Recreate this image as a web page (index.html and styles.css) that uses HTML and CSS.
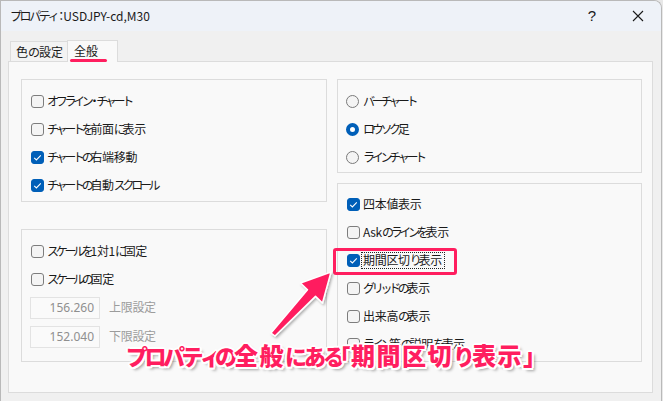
FILE: index.html
```html
<!DOCTYPE html>
<html lang="ja">
<head>
<meta charset="utf-8">
<title>プロパティ</title>
<link rel="stylesheet" href="styles.css">
</head>
<body>
<div class="window">
  <div class="titlebar">
    <span class="title"><span class="k">プロパティ</span><span class="colon">：</span>USDJPY-cd,M30</span>
    <span class="tb-btn help">?</span>
    <span class="tb-btn close">
      <svg width="12" height="12" viewBox="0 0 12 12"><path d="M1 1 L11 11 M11 1 L1 11" stroke="#1a1a1a" stroke-width="1.1" fill="none"/></svg>
    </span>
  </div>
  <div class="client">
    <div class="tabs">
      <div class="tab">色<span class="k">の</span>設定</div>
      <div class="tab active">全般<span class="tab-mark"></span></div>
    </div>
    <div class="panel">
      <div class="col">
        <div class="group g-lt">
          <div class="row"><span class="cb"></span><span class="lbl"><span class="k">オフライン</span><span class="dot">・</span><span class="k">チャート</span></span></div>
          <div class="row"><span class="cb"></span><span class="lbl"><span class="k">チャートを</span>前面<span class="k">に</span>表示</span></div>
          <div class="row"><span class="cb on"><svg width="13" height="13" viewBox="0 0 13 13"><path d="M3.2 6.8 L5.4 9 L9.8 4.4" stroke="#fff" stroke-width="1.1" fill="none"/></svg></span><span class="lbl"><span class="k">チャートの</span>右端移動</span></div>
          <div class="row"><span class="cb on"><svg width="13" height="13" viewBox="0 0 13 13"><path d="M3.2 6.8 L5.4 9 L9.8 4.4" stroke="#fff" stroke-width="1.1" fill="none"/></svg></span><span class="lbl"><span class="k">チャートの</span>自動<span class="k">スクロール</span></span></div>
        </div>
        <div class="group g-lb">
          <div class="row"><span class="cb"></span><span class="lbl"><span class="k">スケールを</span>1対1<span class="k">に</span>固定</span></div>
          <div class="row"><span class="cb"></span><span class="lbl"><span class="k">スケールの</span>固定</span></div>
          <div class="row irow"><span class="inp">156.260</span><span class="lbl dis">上限設定</span></div>
          <div class="row irow"><span class="inp">152.040</span><span class="lbl dis">下限設定</span></div>
        </div>
      </div>
      <div class="col">
        <div class="group g-rt">
          <div class="row"><span class="rb"></span><span class="lbl"><span class="k">バーチャート</span></span></div>
          <div class="row"><span class="rb on"></span><span class="lbl"><span class="k">ロウソク</span>足</span></div>
          <div class="row"><span class="rb"></span><span class="lbl"><span class="k">ラインチャート</span></span></div>
        </div>
        <div class="group g-rb">
          <div class="row"><span class="cb on"><svg width="13" height="13" viewBox="0 0 13 13"><path d="M3.2 6.8 L5.4 9 L9.8 4.4" stroke="#fff" stroke-width="1.1" fill="none"/></svg></span><span class="lbl">四本値表示</span></div>
          <div class="row"><span class="cb"></span><span class="lbl">Ask<span class="k">のラインを</span>表示</span></div>
          <div class="row"><span class="cb on"><svg width="13" height="13" viewBox="0 0 13 13"><path d="M3.2 6.8 L5.4 9 L9.8 4.4" stroke="#fff" stroke-width="1.1" fill="none"/></svg></span><span class="lbl focus">期間区切<span class="k">り</span>表示</span></div>
          <div class="row"><span class="cb"></span><span class="lbl"><span class="k">グリッドの</span>表示</span></div>
          <div class="row"><span class="cb"></span><span class="lbl">出来高<span class="k">の</span>表示</span></div>
          <div class="row"><span class="cb"></span><span class="lbl"><span class="k">ライン</span>等<span class="k">の</span>説明<span class="k">を</span>表示</span></div>
        </div>
      </div>
    </div>
  </div>

  <div class="hl-box"></div>
  <svg class="arrow" width="663" height="401" viewBox="0 0 663 401">
    <defs>
      <filter id="sh" x="-20%" y="-20%" width="140%" height="140%">
        <feDropShadow dx="1.5" dy="1.5" stdDeviation="1.2" flood-color="#000" flood-opacity="0.3"/>
      </filter>
    </defs>
    <polygon points="271,333 307.5,289.8 300.5,283 331,272 322.5,303 315.5,296.4 275,336" fill="#ff1e5f" stroke="#fff" stroke-width="1.5" stroke-linejoin="round" filter="url(#sh)"/>
  </svg>
  <div class="note"><span class="nk">プロパテ</span><span class="sm">ィ</span><span class="nk2">の</span><span class="kj">全般</span><span class="nk2">にある</span><span class="br">「</span><span class="kj">期間区切</span><span class="nk2">り</span><span class="kj">表示</span><span class="br2">」</span></div>
</div>
</body>
</html>
```

FILE: styles.css
```css
* { box-sizing: border-box; }

html, body {
  margin: 0;
  padding: 0;
  width: 663px;
  height: 401px;
  overflow: hidden;
  background: #e8e8e8;
}

body {
  font-family: "Noto Sans CJK JP", "Noto Sans", sans-serif;
  font-size: 12px;
  color: #1a1a1a;
}

.k { letter-spacing: -3.3px; }
.dot { margin: 0 -4px 0 -2px; }

.window {
  position: relative;
  width: 662px;
  height: 401px;
  border: 1px solid #b9b9b9;
  border-bottom: none;
  border-top-right-radius: 8px;
  background: #f0f0f0;
  overflow: hidden;
}

.titlebar {
  height: 30px;
  display: flex;
  align-items: center;
  background: #eef2f8;
  padding-left: 9px;
}

.title {
  flex: 1;
  font-size: 12px;
  line-height: 1;
  padding-bottom: 1px;
  white-space: nowrap;
}

.title .k { letter-spacing: -2.4px; }
.title .colon { letter-spacing: -4px; margin-left: -2px; }

.tb-btn {
  width: 46px;
  height: 30px;
  display: flex;
  align-items: center;
  justify-content: center;
}

.help {
  font-family: "Liberation Sans", sans-serif;
  font-size: 15px;
  padding-bottom: 1px;
}

.client {
  padding: 9px 0 0 7px;
}

.tabs {
  display: flex;
  align-items: flex-end;
  height: 21px;
  padding-left: 2px;
}

.tab {
  height: 20px;
  width: 57px;
  border: 1px solid #dcdcdc;
  border-right: none;
  border-bottom: none;
  background: #f3f3f3;
  padding-left: 5px;
  line-height: 19px;
  font-size: 12px;
  white-space: nowrap;
}

.tab .k { letter-spacing: -1px; }

.tab.active {
  position: relative;
  z-index: 2;
  width: 51px;
  height: 22px;
  margin-bottom: -1px;
  border-right: 1px solid #dcdcdc;
  background: #f9f9f9;
  padding-left: 6px;
  line-height: 20px;
}

.tab-mark {
  position: absolute;
  left: 2px;
  top: 18px;
  width: 37px;
  height: 3px;
  border-radius: 2px;
  background: #ff1e5f;
}

.panel {
  position: relative;
  z-index: 1;
  width: 645px;
  height: 332px;
  border: 1px solid #dcdcdc;
  background: #f9f9f9;
  padding: 17px 0 0 12px;
  display: flex;
  gap: 10px;
}

.col {
  display: flex;
  flex-direction: column;
}

.col:first-child { width: 306px; gap: 27px; }
.col:last-child { width: 305px; gap: 10px; }

.group {
  border: 1px solid #dcdcdc;
  padding: 7px 0 0 9px;
}

.g-lt { height: 123px; }
.g-lb { height: 133px; }
.g-rt { height: 94px; padding-left: 8px; }
.g-rb { height: 179px; padding-top: 6px; }

.row {
  height: 28px;
  display: flex;
  align-items: center;
  gap: 3px;
}

.irow {
  height: 29px;
  gap: 9px;
  margin-left: -1px;
}

.lbl {
  line-height: 1;
  white-space: nowrap;
  padding-bottom: 1px;
  letter-spacing: -0.3px;
}

.lbl.dis { color: #9c9c9c; }

.lbl.focus {
  border: 1px dotted #222;
  padding: 1px 2px 2px 1px;
  margin-left: -2px;
}

.cb {
  width: 13px;
  height: 13px;
  flex: none;
  border: 1px solid #7d7d7d;
  border-radius: 3px;
  background: #f4f4f4;
}

.cb svg { display: block; margin: -1px; }

.cb.on {
  border-color: #005fb8;
  background: #005fb8;
}

.rb {
  width: 13px;
  height: 13px;
  flex: none;
  border: 1px solid #7a7a7a;
  border-radius: 50%;
  background: #f4f4f4;
  margin-right: 1px;
}

.rb.on {
  border: 4px solid #005fb8;
  background: #fff;
}

.inp {
  width: 70px;
  height: 22px;
  border: 1px solid #e3e3e3;
  background: #fafafa;
  color: #8f8f8f;
  text-align: right;
  padding-right: 5px;
  line-height: 20px;
  font-family: "Noto Sans", sans-serif;
  font-size: 12px;
}

/* annotation overlays */
.hl-box {
  position: absolute;
  left: 332px;
  top: 247px;
  width: 124px;
  height: 27px;
  border: 3px solid #ff1e5f;
  border-radius: 3px;
  z-index: 5;
}

.arrow {
  position: absolute;
  left: -1px;
  top: -1px;
  z-index: 6;
}

.note {
  position: absolute;
  left: 125px;
  top: 338px;
  z-index: 7;
  font-size: 22px;
  font-weight: 900;
  line-height: 32px;
  color: #ff1e5f;
  white-space: nowrap;
  text-shadow:
    2px 0 0 #fff, -2px 0 0 #fff, 0 2px 0 #fff, 0 -2px 0 #fff,
    1.5px 1.5px 0 #fff, -1.5px 1.5px 0 #fff, 1.5px -1.5px 0 #fff, -1.5px -1.5px 0 #fff,
    3px 3px 3px rgba(0,0,0,0.35);
}

.note .nk { letter-spacing: -3.5px; }
.note .sm { letter-spacing: -7px; }
.note .nk2 { letter-spacing: -3px; }
.note .kj { font-size: 24px; letter-spacing: 1.5px; }
.note .br { margin-left: -13px; }
.note .br2 { font-size: 24px; }
```
